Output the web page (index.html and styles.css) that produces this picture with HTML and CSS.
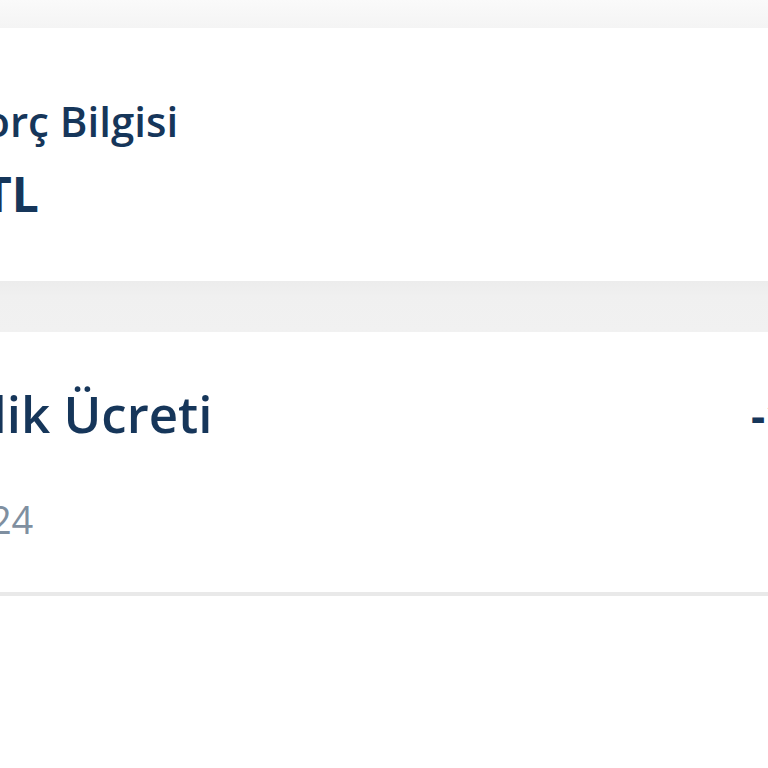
FILE: index.html
```html
<!DOCTYPE html>
<html lang="tr">
<head>
<meta charset="utf-8">
<title>Borç Bilgisi</title>
<link rel="stylesheet" href="styles.css">
</head>
<body>
<div class="page">
  <div class="band band-top"></div>
  <section class="card summary">
    <h2 class="summary-title">Aylık Borç Bilgisi</h2>
    <div class="summary-amount">1.250 TL</div>
  </section>
  <div class="band band-mid"></div>
  <section class="card item">
    <div class="item-row">
      <div class="item-main">
        <div class="item-title">Üyelik Ücreti</div>
        <div class="item-date">03.2024</div>
      </div>
      <div class="item-amount">-1.250 TL</div>
    </div>
  </section>
</div>
</body>
</html>
```

FILE: styles.css
```css
html, body {
  margin: 0;
  padding: 0;
  background: #ffffff;
  overflow: hidden;
}

body {
  font-family: "Open Sans", "Noto Sans", sans-serif;
  color: #16365a;
  width: 768px;
  height: 768px;
}

.page {
  margin-left: -152px;
  width: 1200px;
  display: flex;
  flex-direction: column;
}

.band-top {
  height: 28px;
  background: linear-gradient(#fafafa, #f4f4f4);
}

.band-mid {
  height: 51px;
  background: linear-gradient(#ececec, #f0f0f0 30%, #f1f1f1);
}

.card {
  background: #ffffff;
}

.summary {
  padding: 64px 0 55px 0;
}

.summary-title {
  margin: 0;
  font-size: 42px;
  line-height: 57px;
  font-weight: 600;
  white-space: nowrap;
}

.summary-amount {
  margin-top: 12px;
  font-size: 48px;
  line-height: 65px;
  font-weight: 700;
  white-space: nowrap;
}

.item {
  padding: 46px 0 47px 50px;
  border-bottom: 4px solid #e9e9e9;
}

.item-row {
  display: grid;
  grid-template-columns: 853px auto;
  align-items: start;
}

.item-title {
  font-size: 51px;
  line-height: 70px;
  font-weight: 600;
  white-space: nowrap;
}

.item-date {
  margin-top: 45px;
  margin-left: -5px;
  font-size: 38px;
  line-height: 52px;
  color: #7f8fa0;
}

.item-amount {
  font-size: 44px;
  line-height: 60px;
  margin-top: 7px;
  font-weight: 700;
  white-space: nowrap;
}
```
